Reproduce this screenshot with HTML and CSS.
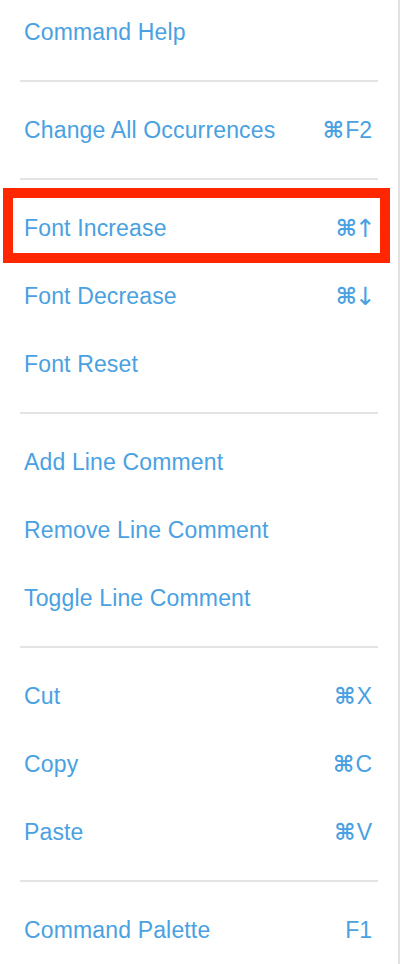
FILE: index.html
```html
<!DOCTYPE html>
<html>
<head>
<meta charset="utf-8">
<link rel="stylesheet" href="styles.css">
</head>
<body>
<div class="panel">
  <ul class="menu">
    <li class="item"><span class="label">Command Help</span></li>
    <li class="sep"></li>
    <li class="item"><span class="label">Change All Occurrences</span><span class="key"><span class="cmd">⌘</span>F2</span></li>
    <li class="sep"></li>
    <li class="item highlighted"><span class="label">Font Increase</span><span class="key"><span class="cmd">⌘</span><span class="arrow">↑</span></span></li>
    <li class="item"><span class="label">Font Decrease</span><span class="key"><span class="cmd">⌘</span><span class="arrow">↓</span></span></li>
    <li class="item"><span class="label">Font Reset</span></li>
    <li class="sep"></li>
    <li class="item"><span class="label">Add Line Comment</span></li>
    <li class="item"><span class="label">Remove Line Comment</span></li>
    <li class="item"><span class="label">Toggle Line Comment</span></li>
    <li class="sep"></li>
    <li class="item"><span class="label">Cut</span><span class="key"><span class="cmd">⌘</span>X</span></li>
    <li class="item"><span class="label">Copy</span><span class="key"><span class="cmd">⌘</span>C</span></li>
    <li class="item"><span class="label">Paste</span><span class="key"><span class="cmd">⌘</span>V</span></li>
    <li class="sep"></li>
    <li class="item"><span class="label">Command Palette</span><span class="key">F1</span></li>
  </ul>
</div>
</body>
</html>
```

FILE: styles.css
```css
html, body {
  margin: 0;
  padding: 0;
  background: #ffffff;
}

body {
  width: 400px;
  height: 964px;
  overflow: hidden;
  font-family: "Liberation Sans", Arial, sans-serif;
  color: #4aa1e2;
}

.panel {
  width: 398px;
  height: 964px;
  border-right: 2px solid #e2e2e2;
  overflow: hidden;
}

.menu {
  list-style: none;
  margin: -2px 0 0 0;
  padding: 0;
}

.item {
  position: relative;
  display: flex;
  align-items: center;
  justify-content: space-between;
  height: 68px;
  padding: 0 26px 0 24px;
  font-size: 23px;
  letter-spacing: 0.15px;
}

.key {
  display: flex;
  align-items: center;
  gap: 1px;
  letter-spacing: 0;
}

.cmd {
  font-family: "DejaVu Sans", sans-serif;
  font-size: 23px;
  font-weight: bold;
}

.arrow {
  font-family: "DejaVu Sans", sans-serif;
  font-size: 25px;
  margin-left: -3px;
  margin-right: -4px;
}

.sep {
  height: 2px;
  margin: 14px 20px;
  background: #e4e4e4;
}

.highlighted::after {
  content: "";
  position: absolute;
  left: 3px;
  right: 8px;
  top: -6px;
  bottom: -1px;
  border: 10px solid #ff2600;
}
```
